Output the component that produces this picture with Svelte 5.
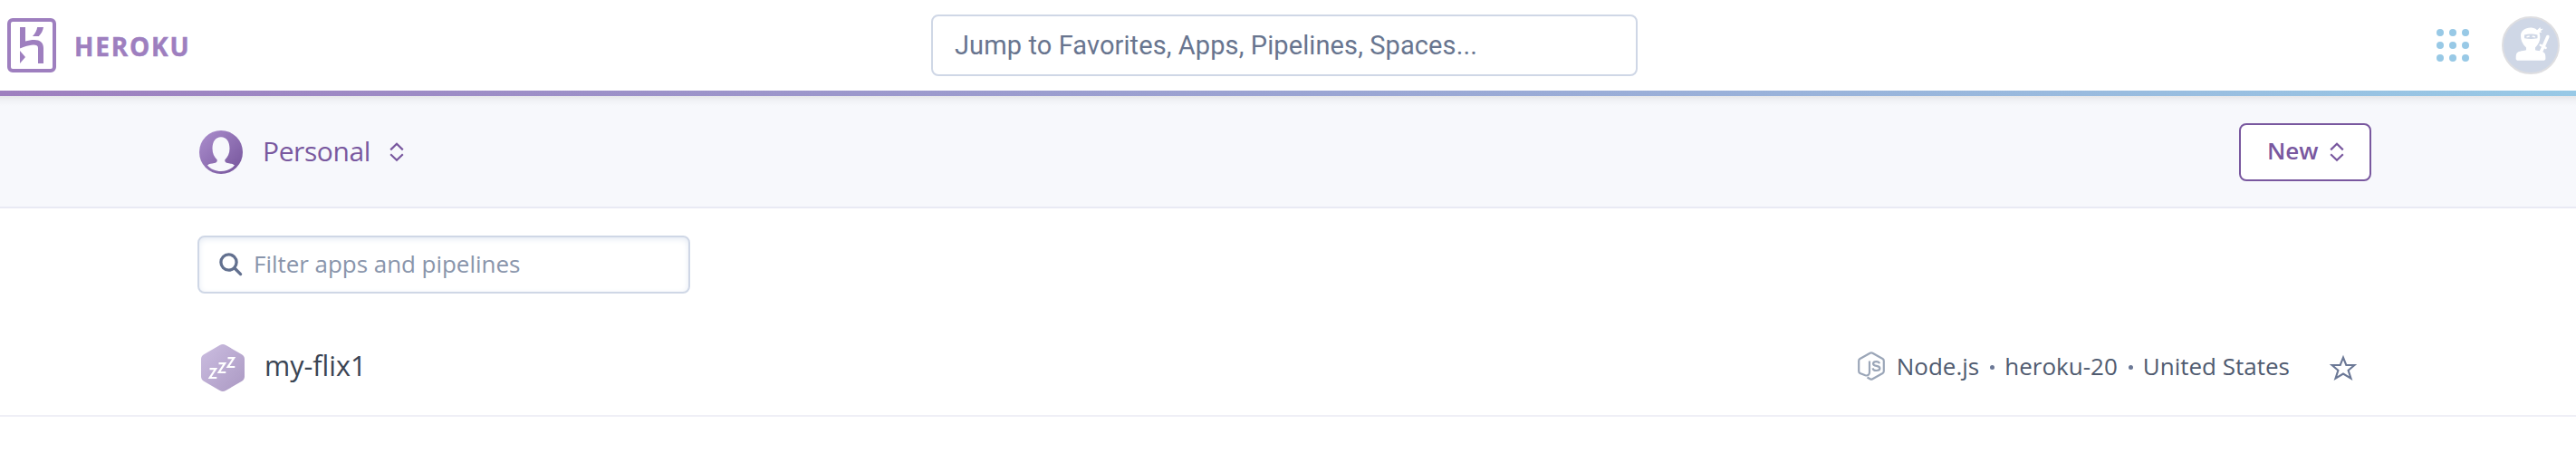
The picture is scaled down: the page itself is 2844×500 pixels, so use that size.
<script>
  const dots = [4, 18, 32];
  const details = ['Node.js', 'heroku-20', 'United States'];
</script>

{#snippet chevrons()}
  <svg class="chevrons" width="16" height="22" viewBox="0 0 16 22" fill="none" stroke="#79589f" stroke-width="2.2">
    <path d="M1.2 8.4 8 1.8l6.8 6.6M1.2 13.2 8 19.8l6.8-6.6" />
  </svg>
{/snippet}

<header class="top">
  <a class="brand" href="#home">
    <svg width="54" height="60" viewBox="8 20 54 60">
      <rect x="10" y="22" width="50" height="56" rx="4" fill="none" stroke="#9e7fbf" stroke-width="4" />
      <path
        fill="#9e7fbf"
        d="M22 30h6v15.6c3-1 6.500-1.600 10-1.600 6 0 10 3 10 9v17h-6V53c0-2.600-2-3.500-5-3.500-6 0-15 4-15 4ZM22 56l6 7-6 7ZM41.200 30H48c-.6 4-2.400 7.200-5.200 10H36c2.800-3 4.600-6.200 5.200-10Z"
      />
    </svg>
    <span>HEROKU</span>
  </a>
  <div class="jump">Jump to Favorites, Apps, Pipelines, Spaces...</div>
  <div class="tools">
    <svg width="36" height="36" viewBox="0 0 36 36" fill="#98c9e6">
      {#each dots as y}{#each dots as x}<circle cx={x} cy={y} r="4" />{/each}{/each}
    </svg>
    <svg width="64" height="64" viewBox="0 0 64 64">
      <circle cx="32" cy="32" r="31" fill="#cfd7e6" stroke="#dedee1" stroke-width="2" />
      <path
        fill="#fff"
        d="M32 12.600c3 0 5.500 1 7 2.700l3.500-3.300.4 2 3-.2-3 2.500 1.600 1.400-3 .4c2 6 .4 12-4.500 16.400v2.700c5 1.200 9.500 1 10.900 4.500.5 1.500.5 4 .4 5.800l-1.300 1.200H17l-1.300-1.200c-.1-1.800-.1-4.300.4-5.800 1.400-3.500 6-3.300 10.900-4.500v-2.700c-4-3.600-6-8-6-13 0-5.400 4.500-8.900 11-8.900Z"
      />
      <path fill="#cfd7e6" d="M25 20.500q7.200-1.800 14.500 0v3.800q-7.200 1.600-14.500 0Z" />
      <path d="m27.500 22.800 3.200-.7M33.700 22.100l3.200.7" stroke="#fff" stroke-width="1.500" />
      <path d="m50.800 22.500-4.500 10.300M46 33.500l-2.700 5.800" stroke="#fff" stroke-width="3.600" stroke-linecap="round" />
      <path d="m42.700 31.700 5.900 3.200" stroke="#fff" stroke-width="2.400" stroke-linecap="round" />
    </svg>
  </div>
</header>

<section class="bar">
  <div class="wrap">
    <div class="owner">
      <svg width="48" height="48" viewBox="0 0 48 48">
        <defs>
          <linearGradient id="owner-fill" x1="0" y1="0" x2="1" y2="1">
            <stop offset="0" stop-color="#ac8fce" /><stop offset="1" stop-color="#74539a" />
          </linearGradient>
        </defs>
        <circle cx="24" cy="24" r="24" fill="url(#owner-fill)" />
        <path
          fill="#f7f8fc"
          d="M24 7.200c6 0 9.500 5 9.500 12.800 0 5-2 9.500-5.100 12.200-.6 2.400.6 3.300 3.100 3.900 3 .7 5.400.6 7.500 2.400-3.600 4.200-8.900 6.500-15 6.500S12.600 42.700 9 38.500c2.100-1.800 4.500-1.700 7.500-2.400 2.500-.6 3.700-1.500 3.100-3.900-3.100-2.700-5.100-7.200-5.100-12.200 0-7.800 3.500-12.800 9.500-12.800Z"
        />
      </svg>
      <span>Personal</span>
      {@render chevrons()}
    </div>
    <button class="new"><span>New</span>{@render chevrons()}</button>
  </div>
</section>

<main>
  <div class="filter">
    <svg width="26" height="26" viewBox="0 0 26 26" fill="none" stroke="#62708f" stroke-width="3.300" stroke-linecap="round">
      <circle cx="10.500" cy="10.500" r="8.600" /><path d="m17 17 6.600 6.600" />
    </svg>
    <span>Filter apps and pipelines</span>
  </div>

  <div class="row">
    <svg width="48" height="52" viewBox="0 0 48 52">
      <defs>
        <linearGradient id="hexagon-fill" x1="0" y1="0" x2="1" y2="1">
          <stop offset="0" stop-color="#cbbde0" /><stop offset="1" stop-color="#ab99c3" />
        </linearGradient>
      </defs>
      <path
        fill="url(#hexagon-fill)"
        d="M20.600 1Q24-1 27.400 1L45 11.200Q48 13 48 16.400V35.600Q48 39 45 40.800L27.400 51Q24 53 20.600 51L3 40.800Q0 39 0 35.600V16.400Q0 13 3 11.200Z"
      />
      <path fill="none" stroke="#fff" stroke-width="2.200" d="M9.500 27.200h6.700L9.700 37h7.600M19.500 21.200h6.700L19.700 31h7.600M29.500 15.200h6.700L29.700 25h7.600" />
    </svg>
    <span class="name">my-flix1</span>
    <div class="meta">
      <svg width="30" height="34" viewBox="0 0 30 34" fill="none" stroke="#9ba6b8" stroke-width="2.200">
        <path d="M13 11.500v12.200c0 3-2 4.300-4.700 3.600L2.600 25Q1.200 24.200 1.200 22.700V11.300Q1.200 9.800 2.500 9L13.600 2.800Q15 2 16.400 2.800L27.500 9Q28.800 9.800 28.800 11.300V22.700Q28.800 24.200 27.500 25L16.400 31.200Q15 32 13.600 31.200L10.500 29.500" />
        <path d="M24 14.300c-.4-1.500-1.600-2.100-3.500-2.100-2.200 0-3.400.8-3.400 2.300 0 3.500 7.300 1.200 7.300 5 0 1.700-1.400 2.500-3.800 2.500-2.500 0-3.800-.9-4-2.700" />
      </svg>
      {#each details as item, i}
        {#if i > 0}<i></i>{/if}
        <span>{item}</span>
      {/each}
    </div>
    <svg class="star" width="32" height="30" viewBox="0 0 32 30" fill="none" stroke="#6b7896" stroke-width="2.100" stroke-linejoin="miter">
      <path d="M16 3.600 19.300 12H28.400L21.600 17.800 24.500 26.700 16 21.500 7.500 26.700 10.400 17.800 3.600 12H12.700Z" />
    </svg>
  </div>
</main>

<style>
  :global(body) {
    background: #fff;
    font-family: 'Open Sans', sans-serif;
  }
  * {
    box-sizing: border-box;
  }
  svg {
    display: block;
    flex: none;
  }
  span {
    white-space: nowrap;
  }
  .top {
    display: grid;
    grid-template-columns: 1028px 780px 1fr;
    align-items: center;
    height: 106px;
    border-bottom: 6px solid;
    border-image: linear-gradient(90deg, #9e7fbf, #98c9e6) 1;
  }
  .brand {
    display: flex;
    align-items: center;
    padding-left: 8px;
    color: #9e7fbf;
    text-decoration: none;
  }
  .brand span {
    margin-left: 20px;
    padding-top: 2px;
    font-size: 28px;
    font-weight: 700;
    letter-spacing: 1.8px;
    -webkit-text-stroke: 0.5px #9e7fbf;
  }
  .jump {
    height: 68px;
    padding-left: 24px;
    border: 2px solid #cfd7e6;
    border-radius: 8px;
    color: #68758f;
    font: 29px/64px Roboto, sans-serif;
    letter-spacing: 0.1px;
  }
  .tools {
    display: flex;
    justify-content: flex-end;
    align-items: center;
    gap: 36px;
    padding-right: 18px;
  }
  .bar {
    height: 124px;
    border-bottom: 2px solid #e9eaf4;
    background: linear-gradient(#e5e6e9, #f1f2f6 5px, #f7f8fc 11px);
  }
  .wrap {
    display: flex;
    justify-content: space-between;
    align-items: center;
    height: 122px;
    margin: 0 226px 0 220px;
    padding-top: 2px;
  }
  .owner {
    display: flex;
    align-items: center;
    color: #79589f;
    font-size: 30px;
    letter-spacing: -0.4px;
  }
  .owner span {
    width: 140px;
    margin-left: 22px;
    padding-bottom: 3px;
  }
  .new {
    display: flex;
    align-items: center;
    width: 146px;
    height: 64px;
    padding: 0 0 0 29px;
    border: 2px solid #79589f;
    border-radius: 8px;
    background: #fff;
    color: #79589f;
    font: 600 26px 'Open Sans', sans-serif;
    text-align: left;
  }
  .new span {
    width: 69px;
    padding-bottom: 4px;
  }
  main {
    padding-top: 30px;
  }
  .filter {
    display: flex;
    align-items: center;
    gap: 12px;
    width: 544px;
    height: 64px;
    margin-left: 218px;
    padding-left: 22px;
    border: 2px solid #cfd7e6;
    border-radius: 8px;
    box-shadow: inset 0 2px 6px #e4eaf3;
    color: #8995ab;
    font-size: 26px;
    letter-spacing: -0.04px;
  }
  .filter span {
    padding-bottom: 3px;
  }
  .row {
    display: flex;
    align-items: center;
    height: 106px;
    margin-top: 30px;
    padding: 0 241px 0 222px;
    border-bottom: 2px solid #efeff6;
  }
  .name {
    margin-left: 22px;
    padding-bottom: 7px;
    color: #3a4453;
    font-size: 30.5px;
  }
  .meta {
    display: flex;
    align-items: center;
    margin-left: auto;
    padding-bottom: 4px;
    color: #505b70;
    font-size: 26px;
  }
  .meta span {
    line-height: 36px;
  }
  .meta svg {
    margin-right: 13px;
  }
  .meta i {
    width: 5px;
    height: 5px;
    margin: 2px 11px 0 12px;
    border-radius: 50%;
    background: #6b7896;
  }
  .star {
    margin-left: 43px;
  }
</style>
